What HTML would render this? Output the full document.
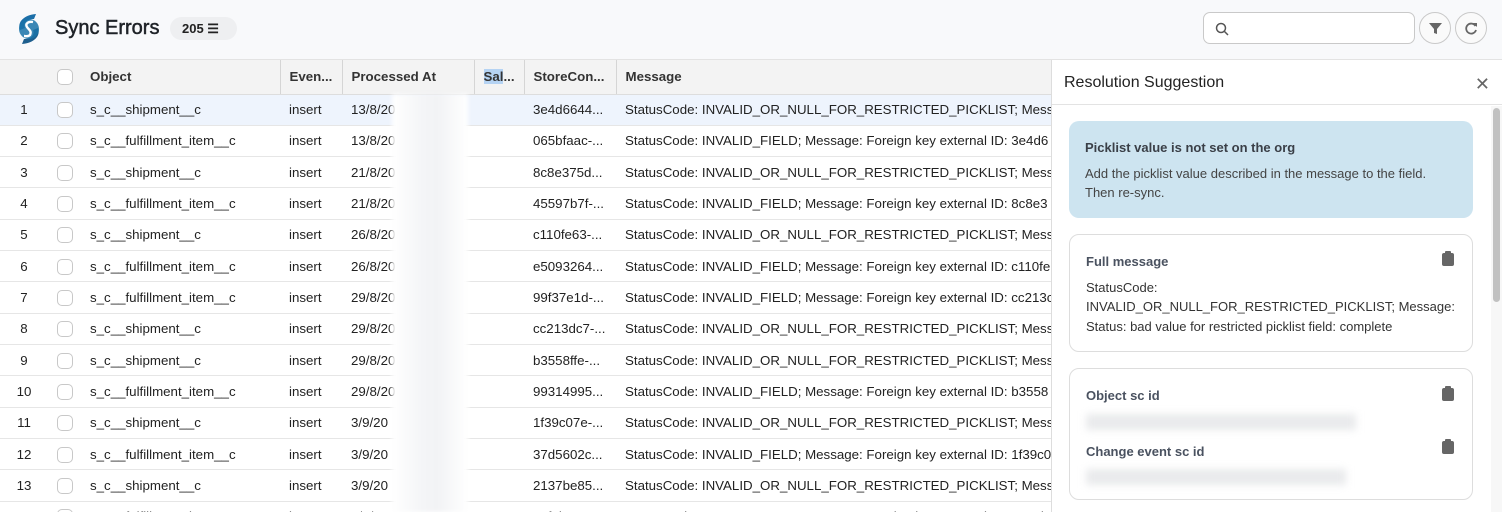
<!DOCTYPE html>
<html><head><meta charset="utf-8"><style>
*{box-sizing:border-box;margin:0;padding:0}
html,body{width:1502px;height:512px;overflow:hidden}
body{background:#f8f9fb;font-family:"Liberation Sans",Arial,sans-serif;color:#1f2328;position:relative}
.top{position:absolute;left:0;top:0;width:1502px;height:60px;background:#f8f9fb;border-bottom:1px solid #e3e3e3}
.title{position:absolute;left:55px;top:17px;font-size:20px;color:#1f2328;-webkit-text-stroke:0.5px #1f2328}
.badge{position:absolute;left:170px;top:17px;width:67px;height:23px;border-radius:12px;background:#eeeff1;font-size:13px;font-weight:bold;line-height:23px;padding-left:12px;color:#222}
.search{position:absolute;left:1203px;top:12px;width:212px;height:32px;border:1px solid #c9c9c9;border-radius:7px;background:#fff}
.cbtn{position:absolute;top:12px;width:32px;height:32px;border:1px solid #c9c9c9;border-radius:50%;background:#fafafa}
.wrap{position:absolute;left:0;top:60px;width:1051px;height:452px;overflow:hidden;background:#fff}
table{border-collapse:collapse;width:1051px;table-layout:fixed;font-size:13.3px;background:#fff}
th{height:34px;background:#f3f3f3;text-align:left;font-weight:bold;color:#333;border-bottom:1px solid #ddd;padding-left:9px;white-space:nowrap;overflow:hidden}
th.b{border-left:1px solid #d5d5d5}
td{height:31.33px;border-bottom:1px solid #e6e6e6;padding-left:9px;white-space:nowrap;overflow:hidden;color:#222}
td.n{text-align:center;padding-left:0}
.cb{display:inline-block;width:16px;height:16px;border:1px solid #c8c8c8;border-radius:5px;background:#fff;vertical-align:middle}
tr.sel td{background:#eef4fd}
.blur{position:absolute;left:392px;top:94px;width:76px;height:418px;background:linear-gradient(90deg,#fff,#f4f5f7 40%,#f2f3f5 60%,#fff);filter:blur(2px)}
.panel{position:absolute;left:1051px;top:60px;width:451px;height:452px;background:#fff;border-left:1px solid #ddd}
.ph{height:45px;border-bottom:1px solid #e3e3e3;font-size:16px;padding:14px 0 0 12px;color:#222}
.x{position:absolute;right:12px;top:14px;font-size:18px;color:#666}
.sb{position:absolute;left:439px;top:46px;width:12px;height:406px;background:#f7f7f7}
.sb div{position:absolute;left:2px;top:2px;width:7px;height:194px;background:#c1c1c1;border-radius:4px}
.card{position:absolute;left:17px;width:404px;border-radius:10px;font-size:13px;line-height:19.5px}
.hint{top:61px;height:97px;background:#cde4f0;padding:17px 16px;color:#444}
.hint b{color:#3a3f47;display:block;margin-bottom:6px}
.box{border:1px solid #ddd;background:#fff;padding:17px 16px;color:#333}
.box b{color:#4a5260;display:block;margin-bottom:6px}
.clip{position:absolute;right:18px;width:12px;height:13px;background:#666;border-radius:2px}
.clip:before{content:"";position:absolute;left:3px;top:-2px;width:6px;height:3px;background:#666;border-radius:1px}
.bl{height:16px;width:270px;background:#e9eaec;filter:blur(4px);margin:8px 0 12px}
</style></head><body>
<div class="top">
<svg style="position:absolute;left:14px;top:12px" width="30" height="34" viewBox="0 0 30 34"><path d="M22 2 C10 3 3 10 6 18 L11 16 C9 11 13 7 20 7 Z" fill="#1c6fa8"/><path d="M8 32 C20 31 27 24 24 16 L19 18 C21 23 17 27 10 27 Z" fill="#1e5f8e"/><circle cx="15" cy="17" r="10" fill="#1a73a8" opacity=".85"/><path d="M19 10 C14 9 11 12 13 15 C15 18 18 19 16 23 C14 25 11 24 10 24" stroke="#fff" stroke-width="2.4" fill="none"/></svg>
<div class="title">Sync Errors</div>
<div class="badge">205 ☰</div>
<div class="search"><svg style="position:absolute;left:11px;top:9px" width="14" height="14" viewBox="0 0 14 14"><circle cx="6" cy="6" r="4.5" stroke="#555" stroke-width="1.5" fill="none"/><path d="M9.5 9.5L13 13" stroke="#555" stroke-width="1.5"/></svg></div>
<div class="cbtn" style="left:1419px"><svg style="position:absolute;left:9px;top:9px" width="13" height="13" viewBox="0 0 13 13"><path d="M0 1h13L8 7v5L5 11V7Z" fill="#666"/></svg></div>
<div class="cbtn" style="left:1455px"><svg style="position:absolute;left:9px;top:9px" width="13" height="13" viewBox="0 0 13 13"><path d="M10.5 4A5 5 0 1 0 11 8" stroke="#666" stroke-width="1.8" fill="none"/><path d="M8 1h4v4z" fill="#666"/></svg></div>
</div>
<div class="wrap">
<table>
<colgroup><col style="width:48px"><col style="width:33px"><col style="width:199px"><col style="width:62px"><col style="width:132px"><col style="width:50px"><col style="width:92px"><col></colgroup>
<tr><th></th><th style="padding-left:9px"><span class="cb"></span></th><th>Object</th><th class="b">Even...</th><th class="b">Processed At</th><th class="b"><span style="background:#b5d3f3">Sal</span>...</th><th class="b">StoreCon...</th><th class="b">Message</th></tr>
<tr class="sel"><td class="n">1</td><td><span class="cb"></span></td><td>s_c__shipment__c</td><td>insert</td><td>13/8/20</td><td></td><td>3e4d6644...</td><td>StatusCode: INVALID_OR_NULL_FOR_RESTRICTED_PICKLIST; Message</td></tr>
<tr><td class="n">2</td><td><span class="cb"></span></td><td>s_c__fulfillment_item__c</td><td>insert</td><td>13/8/20</td><td></td><td>065bfaac-...</td><td>StatusCode: INVALID_FIELD; Message: Foreign key external ID: 3e4d6</td></tr>
<tr><td class="n">3</td><td><span class="cb"></span></td><td>s_c__shipment__c</td><td>insert</td><td>21/8/20</td><td></td><td>8c8e375d...</td><td>StatusCode: INVALID_OR_NULL_FOR_RESTRICTED_PICKLIST; Message</td></tr>
<tr><td class="n">4</td><td><span class="cb"></span></td><td>s_c__fulfillment_item__c</td><td>insert</td><td>21/8/20</td><td></td><td>45597b7f-...</td><td>StatusCode: INVALID_FIELD; Message: Foreign key external ID: 8c8e3</td></tr>
<tr><td class="n">5</td><td><span class="cb"></span></td><td>s_c__shipment__c</td><td>insert</td><td>26/8/20</td><td></td><td>c110fe63-...</td><td>StatusCode: INVALID_OR_NULL_FOR_RESTRICTED_PICKLIST; Message</td></tr>
<tr><td class="n">6</td><td><span class="cb"></span></td><td>s_c__fulfillment_item__c</td><td>insert</td><td>26/8/20</td><td></td><td>e5093264...</td><td>StatusCode: INVALID_FIELD; Message: Foreign key external ID: c110fe</td></tr>
<tr><td class="n">7</td><td><span class="cb"></span></td><td>s_c__fulfillment_item__c</td><td>insert</td><td>29/8/20</td><td></td><td>99f37e1d-...</td><td>StatusCode: INVALID_FIELD; Message: Foreign key external ID: cc213c</td></tr>
<tr><td class="n">8</td><td><span class="cb"></span></td><td>s_c__shipment__c</td><td>insert</td><td>29/8/20</td><td></td><td>cc213dc7-...</td><td>StatusCode: INVALID_OR_NULL_FOR_RESTRICTED_PICKLIST; Message</td></tr>
<tr><td class="n">9</td><td><span class="cb"></span></td><td>s_c__shipment__c</td><td>insert</td><td>29/8/20</td><td></td><td>b3558ffe-...</td><td>StatusCode: INVALID_OR_NULL_FOR_RESTRICTED_PICKLIST; Message</td></tr>
<tr><td class="n">10</td><td><span class="cb"></span></td><td>s_c__fulfillment_item__c</td><td>insert</td><td>29/8/20</td><td></td><td>99314995...</td><td>StatusCode: INVALID_FIELD; Message: Foreign key external ID: b3558</td></tr>
<tr><td class="n">11</td><td><span class="cb"></span></td><td>s_c__shipment__c</td><td>insert</td><td>3/9/20</td><td></td><td>1f39c07e-...</td><td>StatusCode: INVALID_OR_NULL_FOR_RESTRICTED_PICKLIST; Message</td></tr>
<tr><td class="n">12</td><td><span class="cb"></span></td><td>s_c__fulfillment_item__c</td><td>insert</td><td>3/9/20</td><td></td><td>37d5602c...</td><td>StatusCode: INVALID_FIELD; Message: Foreign key external ID: 1f39c0</td></tr>
<tr><td class="n">13</td><td><span class="cb"></span></td><td>s_c__shipment__c</td><td>insert</td><td>3/9/20</td><td></td><td>2137be85...</td><td>StatusCode: INVALID_OR_NULL_FOR_RESTRICTED_PICKLIST; Message</td></tr>
<tr><td class="n">14</td><td><span class="cb"></span></td><td>s_c__fulfillment_item__c</td><td>insert</td><td>3/9/20</td><td></td><td>44f9b34c...</td><td>StatusCode: INVALID_FIELD; Message: Foreign key external ID: 2137b</td></tr>
</table>
</div>
<div class="blur"></div>
<div class="panel">
<div class="ph">Resolution Suggestion</div><div class="x">✕</div>
<div class="card hint"><b>Picklist value is not set on the org</b>Add the picklist value described in the message to the field. Then re-sync.</div>
<div class="card box" style="top:174px;height:118px"><b>Full message</b><div class="clip" style="top:18px"></div>StatusCode:<br>INVALID_OR_NULL_FOR_RESTRICTED_PICKLIST; Message:<br>Status: bad value for restricted picklist field: complete</div>
<div class="card box" style="top:308px;height:132px"><b>Object sc id</b><div class="clip" style="top:19px"></div><div class="bl"></div><b>Change event sc id</b><div class="clip" style="top:72px"></div><div class="bl" style="width:260px"></div></div>
<div class="sb"><div></div></div>
</div>
</body></html>
